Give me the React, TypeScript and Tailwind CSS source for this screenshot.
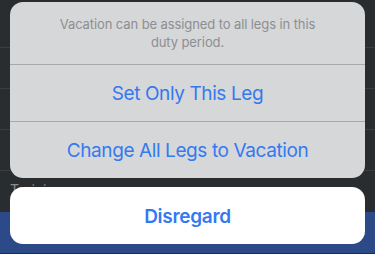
import React from "react";

export default function App() {
  const rows = [0, 1, 2, 3];
  return (
    <div
      className="relative w-[375px] h-[254px] overflow-hidden bg-[#2a2d2f]"
      style={{ fontFamily: "Inter, 'Noto Sans', sans-serif" }}
    >
      {/* background content */}
      <div className="flex flex-col">
        <div className="h-[48px] border-b border-[#3b3e40]" />
        {rows.slice(1).map((r) => (
          <div key={r} className="h-[41px] border-b border-[#3b3e40]" />
        ))}
        <div className="h-[41px] pl-[10px] pt-[8px] text-[14px] text-[#8a8c8e]">Training</div>
        <div className="h-[41px] bg-[#2b4a87]" />
      </div>

      {/* action sheet */}
      <div className="absolute inset-0 flex flex-col px-[10px] pt-[2px]">
        <div className="flex flex-col rounded-[13px] bg-[#d6d7d9] overflow-hidden">
          <div className="h-[62px] flex items-center justify-center">
            <p className="w-[270px] text-center text-[13px] leading-[18px] text-[#8d8e91] tracking-[-0.1px]">
              Vacation can be assigned to all legs in this duty period.
            </p>
          </div>
          <div className="h-px bg-[#a7a8ab]" />
          <div className="h-[56px] pt-[3px] flex items-center justify-center text-[19px] text-[#3479f0] tracking-[-0.4px]">
            Set Only This Leg
          </div>
          <div className="h-px bg-[#a7a8ab]" />
          <div className="h-[56px] pt-[3px] flex items-center justify-center text-[19px] text-[#3479f0] tracking-[-0.4px]">
            Change All Legs to Vacation
          </div>
        </div>
        <div className="mt-[9px] h-[57px] pt-[3px] rounded-[13px] bg-white flex items-center justify-center text-[19px] font-semibold text-[#3479f0] tracking-[-0.3px]">
          Disregard
        </div>
      </div>
    </div>
  );
}
